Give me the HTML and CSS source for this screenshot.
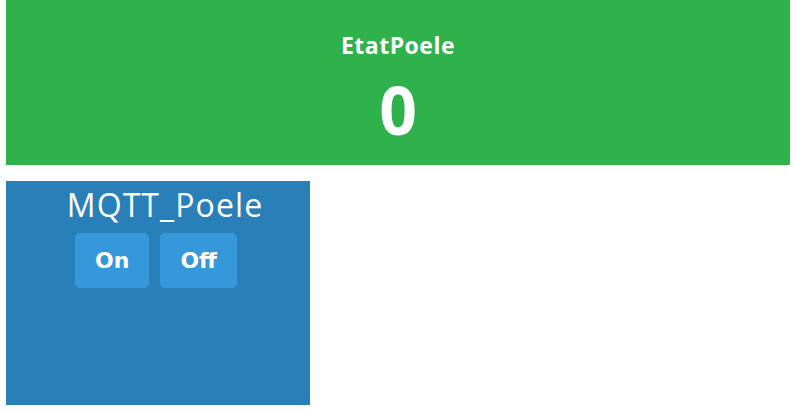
FILE: index.html
```html
<!DOCTYPE html>
<html>
<head>
<meta charset="utf-8">
<link rel="stylesheet" href="styles.css">
</head>
<body>
<div class="page">
  <section class="tile tile-state">
    <div class="tile-title">EtatPoele</div>
    <div class="tile-value">0</div>
  </section>
  <div class="row">
    <section class="tile tile-switch">
      <div class="switch-title">MQTT_Poele</div>
      <div class="buttons">
        <button class="btn">On</button>
        <button class="btn">Off</button>
      </div>
    </section>
  </div>
</div>
</body>
</html>
```
FILE: styles.css
```css
html, body {
  margin: 0;
  padding: 0;
  background: #ffffff;
}
body {
  font-family: "Open Sans", "DejaVu Sans", sans-serif;
  color: #ffffff;
}
.page {
  padding: 0 4px 0 6px;
  display: flex;
  flex-direction: column;
  gap: 16px;
}
.tile-state {
  background: #2fb14c;
  height: 165px;
  box-sizing: border-box;
  padding-top: 30px;
  display: flex;
  flex-direction: column;
  align-items: center;
}
.tile-title {
  font-weight: 700;
  font-size: 23px;
  line-height: 30px;
  letter-spacing: 0.5px;
}
.tile-value {
  font-weight: 700;
  font-size: 66px;
  line-height: 90px;
  margin-top: 4px;
}
.row {
  display: flex;
}
.tile-switch {
  background: #2980b9;
  width: 304px;
  height: 224px;
  box-sizing: border-box;
  padding-top: 2px;
  display: flex;
  flex-direction: column;
  align-items: center;
}
.switch-title {
  font-size: 32px;
  line-height: 43px;
  letter-spacing: 1.1px;
  padding-left: 14px;
}
.buttons {
  display: flex;
  gap: 11px;
  margin-top: 7px;
  margin-right: 4px;
}
.btn {
  font-family: "DejaVu Sans", sans-serif;
  font-weight: 700;
  font-size: 22px;
  color: #ffffff;
  background: #3498db;
  border: none;
  border-radius: 5px;
  height: 55px;
  padding: 0 20px;
  cursor: pointer;
}
```
